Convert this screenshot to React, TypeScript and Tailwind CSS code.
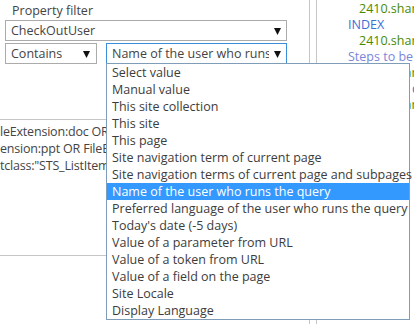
import React from "react";

const items = [
  "Select value",
  "Manual value",
  "This site collection",
  "This site",
  "This page",
  "Site navigation term of current page",
  "Site navigation terms of current page and subpages",
  "Name of the user who runs the query",
  "Preferred language of the user who runs the query",
  "Today's date (-5 days)",
  "Value of a parameter from URL",
  "Value of a token from URL",
  "Value of a field on the page",
  "Site Locale",
  "Display Language",
];

function Arrow() {
  return (
    <svg width="7" height="8" viewBox="0 0 7 8" className="shrink-0">
      <polygon points="0,1 7,1 3.5,8" fill="#111" />
    </svg>
  );
}

export default function App() {
  const font = { fontFamily: '"Open Sans", "Noto Sans", sans-serif' };
  return (
    <div
      className="relative w-[414px] h-[324px] overflow-hidden bg-white text-[12.5px] text-[#444]"
      style={font}
    >
      <div className="flex h-full">
        <div className="w-[310px] shrink-0 border-r border-[#c6c6c6] h-full overflow-hidden">
          <div className="pl-[12px] pt-[2px] leading-[17px] h-[20px] text-[#444]">Property filter</div>
          <div className="ml-[5px] w-[282px] h-[21px] border border-[#ababab] flex items-center justify-between pl-[5px] pr-[5px] leading-[17px]">
            <span>CheckOutUser</span>
            <Arrow />
          </div>
          <div className="flex mt-[2px] ml-[5px]">
            <div className="w-[92px] h-[21px] border border-[#ababab] flex items-center justify-between pl-[5px] pr-[6px] leading-[17px]">
              <span>Contains</span>
              <Arrow />
            </div>
            <div className="ml-[9px] w-[181px] h-[21px] border border-[#3c8ddb] flex items-center pl-[5px] pr-[5px] leading-[17px]">
              <span className="flex-1 overflow-hidden whitespace-nowrap mr-[5px]">Name of the user who runs the query</span>
              <Arrow />
            </div>
          </div>
          <div className="mt-[55px] border-t border-[#c6c6c6] pt-[3px] leading-[17px] whitespace-nowrap">
            <div className="w-[106px] overflow-hidden tracking-[-0.2px]">
              <div>leExtension:doc OR FileExtension:docx</div>
              <div>ension:ppt OR FileExtension:pptx</div>
              <div>tclass:"STS_ListItem_DocumentLibrary"</div>
            </div>
          </div>
          <div className="mt-[81px] border-t border-[#c6c6c6]" />
        </div>
        <div className="w-[6px] shrink-0" />
        <div className="flex-1 border-l border-[#c6c6c6] h-full overflow-hidden pl-[31px] pt-[1px] leading-[16px] whitespace-nowrap">
          <div className="pl-[11px] text-[#4a8a00]">2410.sharepoint</div>
          <div className="text-[#3a6fd8]">INDEX</div>
          <div className="pl-[11px] text-[#4a8a00]">2410.sharepoint</div>
          <div className="text-[#7a86d8]">Steps to be performed</div>
          <div className="pl-[11px] text-[#4a8a00]">2410.sharepoint</div>
          <div className="text-[#3a6fd8]">Create the query</div>
          <div className="pl-[11px] text-[#4a8a00]">2410.sharepoint</div>
        </div>
      </div>

      <div className="absolute left-[106px] top-[63px] w-[304px] h-[257px] border border-[#7f9db9] bg-white z-10 leading-[17px]">
        {items.map((it) => (
          <div
            key={it}
            className={
              "h-[17px] pl-[5px] whitespace-nowrap " +
              (it === "Name of the user who runs the query" ? "bg-[#3399ff] text-white" : "text-[#3c3c3c]")
            }
          >
            {it}
          </div>
        ))}
      </div>
    </div>
  );
}
